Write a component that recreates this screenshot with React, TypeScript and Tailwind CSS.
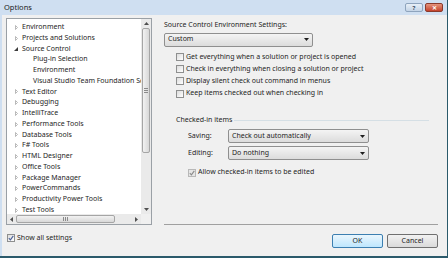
import { ChevronDown } from 'lucide-react';

const font = { fontFamily: '"Noto Sans", "Open Sans", sans-serif' };

type Node = { label: string; level: 0 | 1; open?: boolean; leaf?: boolean };

const tree: Node[] = [
  { label: 'Environment', level: 0 },
  { label: 'Projects and Solutions', level: 0 },
  { label: 'Source Control', level: 0, open: true },
  { label: 'Plug-in Selection', level: 1, leaf: true },
  { label: 'Environment', level: 1, leaf: true },
  { label: 'Visual Studio Team Foundation Server', level: 1, leaf: true },
  { label: 'Text Editor', level: 0 },
  { label: 'Debugging', level: 0 },
  { label: 'IntelliTrace', level: 0 },
  { label: 'Performance Tools', level: 0 },
  { label: 'Database Tools', level: 0 },
  { label: 'F# Tools', level: 0 },
  { label: 'HTML Designer', level: 0 },
  { label: 'Office Tools', level: 0 },
  { label: 'Package Manager', level: 0 },
  { label: 'PowerCommands', level: 0 },
  { label: 'Productivity Power Tools', level: 0 },
  { label: 'Test Tools', level: 0 },
];

function Check({ checked = false, disabled = false }: { checked?: boolean; disabled?: boolean }) {
  return (
    <span
      className={`flex h-[8px] w-[8px] shrink-0 items-center justify-center border ${
        disabled ? 'border-[#b8b8b8] bg-[#e6e6e6]' : 'border-[#8e8f8f] bg-gradient-to-br from-[#dcdcdc] to-white'
      }`}
    >
      {checked && (
        <svg width="6" height="6" viewBox="0 0 6 6">
          <path d="M0.8 3.2 L2.4 4.8 L5.3 0.9" fill="none" stroke={disabled ? '#8a8a8a' : '#4a5f97'} strokeWidth="1.1" />
        </svg>
      )}
    </span>
  );
}

function Combo({ value, width }: { value: string; width: string }) {
  return (
    <div
      className={`flex h-[14px] ${width} items-center justify-between rounded-[2px] border border-[#8f8f8f] bg-gradient-to-b from-[#f4f4f4] to-[#dcdcdc] pl-[3px] pr-[3px] text-[7px] text-[#1e1e1e]`}
    >
      <span>{value}</span>
      <svg width="5" height="3" viewBox="0 0 5 3">
        <path d="M0 0 H5 L2.5 3 Z" fill="#1e1e1e" />
      </svg>
    </div>
  );
}

export default function App() {
  return (
    <div
      style={font}
      className="flex h-[258px] w-[448px] flex-col overflow-hidden border-b-2 border-r border-[#2b5a6b] bg-[#cfdff1]"
    >
      {/* Title bar */}
      <div className="flex h-[15px] shrink-0 items-center justify-between pl-[4px] pr-[4px]">
        <span className="text-[7.5px] text-[#1b1b1b]">Options</span>
        <div className="flex items-center gap-[2px]">
          <div className="flex h-[9px] w-[18px] items-center justify-center rounded-[2px] border border-[#8ea4bd] bg-gradient-to-b from-[#e8f0f8] to-[#c4d4e6] text-[6px] font-bold leading-none text-[#33475f]">
            ?
          </div>
          <div className="flex h-[9px] w-[18px] items-center justify-center rounded-[2px] border border-[#8a3a2c] bg-gradient-to-b from-[#e4937c] to-[#c4402a] text-[6px] font-bold leading-none text-white">
            ✕
          </div>
        </div>
      </div>

      {/* Body */}
      <div className="ml-[2px] flex flex-1 bg-[#f0f0f0] pl-[4px] pr-[9px]">
        {/* Left column */}
        <div className="flex w-[146px] shrink-0 flex-col">
          <div className="mt-[3px] flex h-[207px] flex-col border border-[#9aa0a6] bg-white">
            <div className="flex flex-1 overflow-hidden">
              <div className="flex-1 overflow-hidden pt-[3px]">
                {tree.map((n, i) => (
                  <div
                    key={i}
                    className={`flex h-[10.75px] items-center whitespace-nowrap text-[7px] text-[#1e1e1e] ${
                      n.level === 1 ? 'pl-[26px]' : 'pl-[7px]'
                    }`}
                  >
                    {!n.leaf && (
                      <span className="mr-[4px] flex w-[4px] justify-center">
                        {n.open ? (
                          <svg width="4" height="4" viewBox="0 0 4 4">
                            <path d="M4 0 V4 H0 Z" fill="#3c3c3c" />
                          </svg>
                        ) : (
                          <svg width="3" height="5" viewBox="0 0 3 5">
                            <path d="M0.5 0.5 L2.5 2.5 L0.5 4.5 Z" fill="none" stroke="#a7a7a7" strokeWidth="0.8" />
                          </svg>
                        )}
                      </span>
                    )}
                    <span>{n.label}</span>
                  </div>
                ))}
              </div>
              {/* vertical scrollbar */}
              <div className="flex w-[10px] shrink-0 flex-col bg-[#eaeaea]">
                <div className="flex h-[9px] items-center justify-center">
                  <svg width="5" height="3" viewBox="0 0 5 3">
                    <path d="M0 3 H5 L2.5 0 Z" fill="#505050" />
                  </svg>
                </div>
                <div className="mx-[1px] flex h-[125px] items-center justify-center rounded-[2px] border border-[#a5a5a5] bg-gradient-to-r from-[#f2f2f2] to-[#d8d8d8]">
                  <div className="flex flex-col gap-[1px]">
                    <div className="h-px w-[4px] bg-[#8a8a8a]" />
                    <div className="h-px w-[4px] bg-[#8a8a8a]" />
                    <div className="h-px w-[4px] bg-[#8a8a8a]" />
                  </div>
                </div>
                <div className="flex-1" />
                <div className="flex h-[9px] items-center justify-center">
                  <svg width="5" height="3" viewBox="0 0 5 3">
                    <path d="M0 0 H5 L2.5 3 Z" fill="#505050" />
                  </svg>
                </div>
              </div>
            </div>
            {/* horizontal scrollbar */}
            <div className="flex h-[10px] shrink-0 items-center bg-[#eaeaea]">
              <div className="flex w-[9px] justify-center">
                <svg width="3" height="5" viewBox="0 0 3 5">
                  <path d="M3 0 V5 L0 2.5 Z" fill="#505050" />
                </svg>
              </div>
              <div className="flex h-[8px] w-[99px] items-center justify-center rounded-[2px] border border-[#a5a5a5] bg-gradient-to-b from-[#f2f2f2] to-[#d8d8d8]">
                <div className="flex gap-[1px]">
                  <div className="h-[4px] w-px bg-[#8a8a8a]" />
                  <div className="h-[4px] w-px bg-[#8a8a8a]" />
                  <div className="h-[4px] w-px bg-[#8a8a8a]" />
                </div>
              </div>
              <div className="flex-1" />
              <div className="flex w-[9px] justify-center">
                <svg width="3" height="5" viewBox="0 0 3 5">
                  <path d="M0 0 V5 L3 2.5 Z" fill="#505050" />
                </svg>
              </div>
              <div className="w-[10px] self-stretch bg-[#f0f0f0]" />
            </div>
          </div>
          <div className="mt-[8px] flex items-center gap-[2px] pl-[1px] text-[7px] text-[#1e1e1e]">
            <Check checked />
            <span>Show all settings</span>
          </div>
        </div>

        {/* Right column */}
        <div className="flex flex-1 flex-col pl-[12px]">
          <div className="mt-[5px] text-[7px] text-[#1e1e1e]">Source Control Environment Settings:</div>
          <div className="mt-[2px]">
            <Combo value="Custom" width="w-[149px]" />
          </div>
          <div className="mt-[6px] flex flex-col gap-[3.8px] pl-[12px] text-[7px] text-[#1e1e1e]">
            {[
              'Get everything when a solution or project is opened',
              'Check in everything when closing a solution or project',
              'Display silent check out command in menus',
              'Keep items checked out when checking in',
            ].map((t) => (
              <div key={t} className="flex h-[8.5px] items-center gap-[2px]">
                <Check />
                <span>{t}</span>
              </div>
            ))}
          </div>

          <div className="mt-[17px] flex items-center pl-[12px] text-[7px] text-[#1e1e1e]">
            <span>Checked-in items</span>
            <div className="ml-[2px] mr-[9px] h-px flex-1 bg-[#d5dfe5]" />
          </div>
          <div className="mt-[4px] flex flex-col gap-[3px] pl-[24px] text-[7px] text-[#1e1e1e]">
            <div className="flex items-center">
              <span className="w-[40px]">Saving:</span>
              <Combo value="Check out automatically" width="w-[141px]" />
            </div>
            <div className="flex items-center">
              <span className="w-[40px]">Editing:</span>
              <Combo value="Do nothing" width="w-[141px]" />
            </div>
            <div className="mt-[4px] flex items-center gap-[2px]">
              <Check checked disabled />
              <span>Allow checked-in items to be edited</span>
            </div>
          </div>

          <div className="mt-auto mb-[8px] flex flex-col">
            <div className="h-px bg-[#a0a0a0]" />
            <div className="mt-[9px] flex justify-end gap-[4px]">
              <button className="flex h-[14px] w-[51px] items-center justify-center rounded-[2px] border border-[#3c7fb1] bg-gradient-to-b from-[#eaf6fd] to-[#bee6fd] text-[7px] text-[#1e1e1e]">
                OK
              </button>
              <button className="flex h-[14px] w-[51px] items-center justify-center rounded-[2px] border border-[#707070] bg-gradient-to-b from-[#f2f2f2] to-[#dadada] text-[7px] text-[#1e1e1e]">
                Cancel
              </button>
            </div>
          </div>
        </div>
      </div>
    </div>
  );
}
